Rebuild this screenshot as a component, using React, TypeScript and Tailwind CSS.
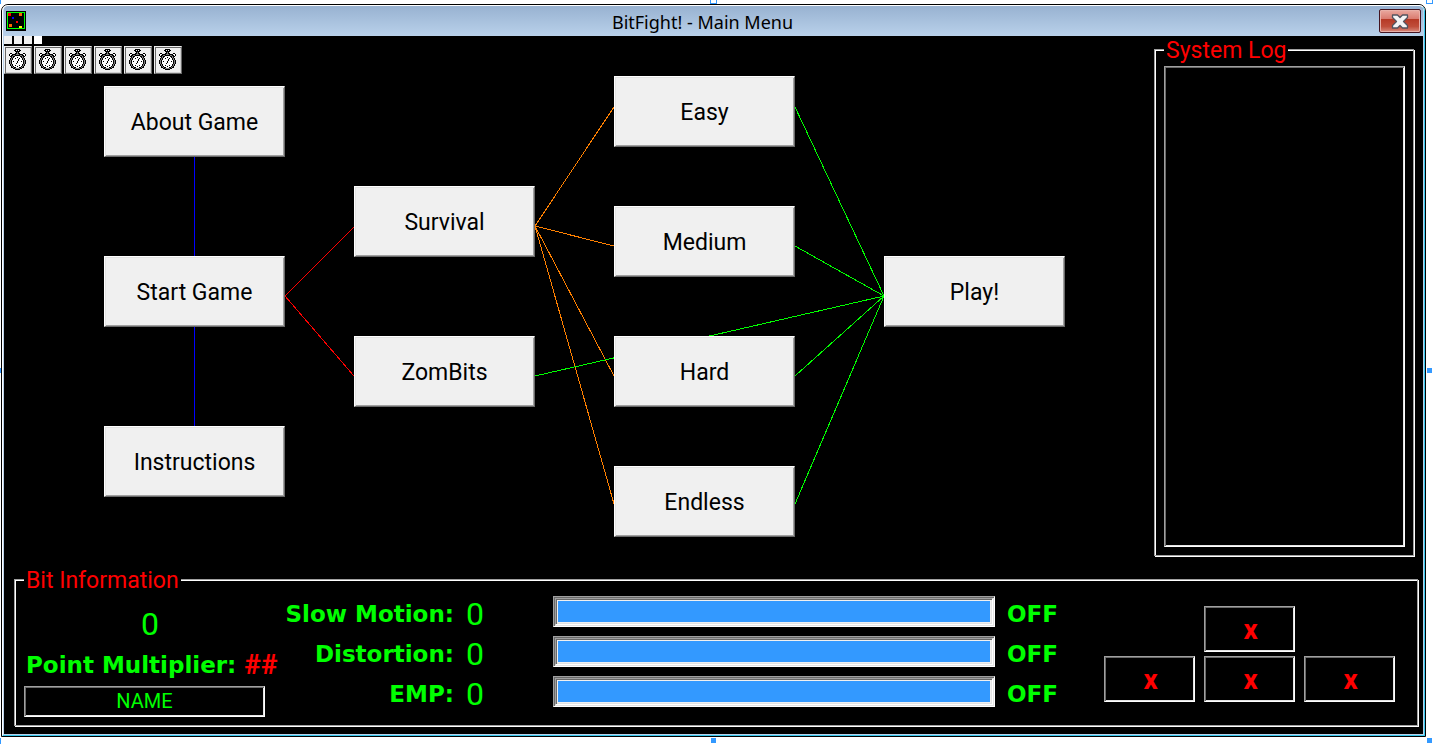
import React from "react";

const raised =
  "border border-t-white border-l-white border-r-[#696969] border-b-[#696969] shadow-[inset_1px_1px_0_#e3e3e3,inset_-1px_-1px_0_#a0a0a0]";
const sunken =
  "border border-t-[#a0a0a0] border-l-[#a0a0a0] border-r-white border-b-white shadow-[inset_1px_1px_0_#696969,inset_-1px_-1px_0_#e3e3e3]";
const etched =
  "min-w-0 border border-[#a0a0a0] shadow-[inset_1px_1px_0_#fff,1px_1px_0_#fff]";
const legendText = "bg-black px-0.5 pt-1 text-[23px] leading-[22px] text-[#ff0000]";

const STOPWATCH = [
  "......#####......",
  ".....##.#.##.....",
  "......#####......",
  ".......#o#.......",
  ".##...##o##...##.",
  "#ww####ooo####ww#",
  "#w##oo#####oo##w#",
  ".##o##wwwww##o##.",
  "..#o#www#www#o#..",
  ".#o#ww#www#ww#o#.",
  ".#o#wwwww#www#o#.",
  "#o#wwwwww#wwww#o#",
  "#o#w#www#www#w#o#",
  "#o#wwwww#wwwww#o#",
  "#o#wwww#wwwwww#o#",
  ".#o#wwwwwwwww#o#.",
  ".#o#ww#www#ww#o#.",
  "..#o#www#www#o#..",
  "..##o##www##o##..",
  "....##ooooo##....",
  "......#####......",
];
const INK: Record<string, string> = { "#": "#000", o: "#808080", w: "#fff" };

function Stopwatch() {
  return (
    <svg width="17" height="21" viewBox="0 0 17 21" shapeRendering="crispEdges" aria-hidden="true">
      {STOPWATCH.flatMap((row, y) =>
        [...row].map((c, x) =>
          c === "." ? null : <rect key={`${x}-${y}`} x={x} y={y} width="1" height="1" fill={INK[c]} />
        )
      )}
    </svg>
  );
}

function AppIcon() {
  return (
    <svg width="20" height="20" viewBox="0 0 20 20" shapeRendering="crispEdges" aria-hidden="true">
      <rect width="20" height="20" fill="#000" />
      <rect x="1.5" y="1.5" width="17" height="16" fill="none" stroke="#00ff00" />
      <rect x="2" y="2" width="3" height="3" fill="#ff0000" />
      <rect x="13" y="2" width="3" height="3" fill="#ff6600" />
      <rect x="6" y="6" width="2" height="2" fill="#0000ff" />
      <rect x="10" y="10" width="2" height="2" fill="#ff0000" />
      <rect x="3" y="13" width="3" height="3" fill="#ff6600" />
      <rect x="13" y="15" width="3" height="2" fill="#ffff00" />
    </svg>
  );
}

function TitleBar() {
  return (
    <header className="flex h-[30px] items-center bg-linear-to-b from-[#98b2d1] to-[#b9d1ea] pr-0.5 pl-0.5">
      <AppIcon />
      <h1 className="flex-1 pt-0.5 text-center font-['Noto_Sans'] text-[18px] leading-6 text-black">
        BitFight! - Main Menu
      </h1>
      <button
        type="button"
        aria-label="Close"
        className="flex h-6 w-[42px] items-center justify-center rounded-[2px] border border-[#431420] bg-[linear-gradient(to_bottom,#eaaaa0_0%,#d9796d_42%,#b63a26_43%,#c04e3a_75%,#d88a7c_100%)] shadow-[inset_0_0_0_1px_#e8b0a8]"
      >
        <svg width="18" height="15" viewBox="0 0 18 15" aria-hidden="true">
          <path
            d="M1.5 1H6.500L9 3.500L11.500 1H16.500V3.500L12.500 7.500L16.500 11.500V14H11.500L9 11.500L6.500 14H1.500V11.500L5.500 7.500L1.500 3.500Z"
            fill="#f4f4f4"
            stroke="#53545f"
            strokeWidth="1.300"
            strokeLinejoin="round"
          />
        </svg>
      </button>
    </header>
  );
}

const NODES = [
  { label: "About Game", at: "left-[100px] top-[50px]" },
  { label: "Start Game", at: "left-[100px] top-[220px]" },
  { label: "Instructions", at: "left-[100px] top-[390px]" },
  { label: "Survival", at: "left-[350px] top-[150px]" },
  { label: "ZomBits", at: "left-[350px] top-[300px]" },
  { label: "Easy", at: "left-[610px] top-[40px]" },
  { label: "Medium", at: "left-[610px] top-[170px]" },
  { label: "Hard", at: "left-[610px] top-[300px]" },
  { label: "Endless", at: "left-[610px] top-[430px]" },
  { label: "Play!", at: "left-[880px] top-[220px]" },
];

const EDGES: [string, string][] = [
  ["#0000ff", "M190.500 121V220M190.500 291V390"],
  ["#ff0000", "M281 260L350 191M281 260L350 340"],
  ["#ff8000", "M531 190L610 71M531 190L610 210M531 190L610 340M531 190L610 468"],
  ["#00ff00", "M880 260L791 71M880 260L791 210M880 260L531 340M880 260L791 340M880 260L791 468"],
];

function MenuMap() {
  return (
    <nav aria-label="Main menu" className="relative min-w-[1064px] flex-1">
      <div className="flex gap-0.5" aria-hidden="true">
        <span className="size-2 bg-[#f0f0f0]" />
        <span className="size-2 bg-[#f0f0f0]" />
        <span className="size-2 bg-[#f0f0f0]" />
        <span className="size-2 bg-white" />
      </div>
      <div className="mt-0.5 flex gap-0.5">
        {[1, 2, 3, 4, 5, 6].map((n) => (
          <button
            key={n}
            type="button"
            aria-label={`Timer ${n}`}
            className="flex size-7 items-center justify-center border border-t-[#f0f0f0] border-r-[#696969] border-b-[#696969] border-l-[#f0f0f0] bg-[#f0f0f0] pr-0.5 pb-0.5 shadow-[inset_1px_1px_0_#696969,inset_-1px_-1px_0_#d0d0d0]"
          >
            <Stopwatch />
          </button>
        ))}
      </div>
      <svg
        className="absolute top-0 left-0"
        width="1064"
        height="520"
        viewBox="0 0 1064 520"
        fill="none"
        shapeRendering="crispEdges"
        aria-hidden="true"
      >
        {EDGES.map(([color, d]) => (
          <path key={color} d={d} stroke={color} />
        ))}
      </svg>
      {NODES.map(({ label, at }) => (
        <button
          key={label}
          type="button"
          className={`absolute h-[71px] w-[181px] bg-[#f0f0f0] pt-0.5 text-[23px] leading-7 text-black ${raised} ${at}`}
        >
          {label}
        </button>
      ))}
    </nav>
  );
}

function SystemLog() {
  return (
    <fieldset className={`mr-[9px] h-[520px] w-[260px] shrink-0 px-[9px] ${etched}`}>
      <legend className={legendText}>System Log</legend>
      <textarea
        readOnly
        aria-label="System Log"
        className={`mt-1 block h-[481px] w-[241px] resize-none bg-black text-[#ff0000] outline-none ${sunken}`}
      />
    </fieldset>
  );
}

const boldGreen = "font-['DejaVu_Sans'] text-[23px] leading-7 font-bold text-[#00ff00]";
const digit = "text-[32px] leading-8 text-[#00ff00]";

function Power({ label }: { label: string }) {
  return (
    <div className="flex h-10 items-center">
      <span className={`w-[170px] pt-1 text-right whitespace-nowrap ${boldGreen}`}>{label}</span>
      <span className={`w-[99px] pt-1 pl-3 ${digit}`}>0</span>
      <div className={`mb-px h-[31px] flex-1 p-px ${sunken}`}>
        <div className={`h-full p-px ${sunken}`}>
          <progress
            value={100}
            max={100}
            aria-label={label}
            className="block h-full w-full appearance-none border border-[#f0f0f0] bg-[#3399ff] [&::-webkit-progress-bar]:bg-[#f0f0f0] [&::-webkit-progress-value]:bg-[#3399ff]"
          />
        </div>
      </div>
      <span className={`w-[109px] pt-1 pl-3 ${boldGreen}`}>OFF</span>
    </div>
  );
}

function Slot({ place }: { place: string }) {
  return (
    <div
      className={`flex h-[46px] w-[91px] items-center justify-center pt-0.5 pl-0.5 text-[28px] leading-8 font-bold text-[#ff0000] ${place} ${sunken}`}
    >
      x
    </div>
  );
}

function BitInformation() {
  return (
    <fieldset className={`mt-[10px] mr-[5px] ml-[10px] h-[160px] px-[9px] ${etched}`}>
      <legend className={legendText}>Bit Information</legend>
      <div className="flex items-start">
        <div className="w-[260px] shrink-0 pt-3">
          <div className={`flex h-10 w-[252px] items-center justify-center ${digit}`}>0</div>
          <div className="flex h-10 items-center gap-2 pt-0.5 pl-0.5 whitespace-nowrap">
            <span className={boldGreen}>Point Multiplier:</span>
            <span className="text-[28px] leading-8 font-bold text-[#ff0000]">##</span>
          </div>
          <input
            type="text"
            aria-label="Name"
            defaultValue="NAME"
            className={`mt-0.5 block h-[31px] w-[241px] bg-black pb-0.5 text-center text-[20px] leading-6 text-[#00ff00] outline-none ${sunken}`}
          />
        </div>
        <div className="min-w-0 flex-1">
          <Power label="Slow Motion:" />
          <Power label="Distortion:" />
          <Power label="EMP:" />
        </div>
        <div className="mt-[14px] mr-[13px] grid shrink-0 grid-cols-3 gap-x-[9px] gap-y-1">
          <Slot place="col-start-2" />
          <Slot place="col-start-1" />
          <Slot place="col-start-2" />
          <Slot place="col-start-3" />
        </div>
      </div>
    </fieldset>
  );
}

function SelectionHandles() {
  return (
    <div aria-hidden="true">
      <i className="absolute top-0 left-0 h-1 w-px bg-[#3399ff]" />
      <i className="absolute top-[368px] left-0 h-[5px] w-px bg-[#3399ff]" />
      <i className="absolute top-[738px] left-0 h-[6px] w-px bg-[#3399ff]" />
      <i className="absolute top-0 right-[731px] h-1 w-[7px] border border-t-0 border-[#3399ff] bg-white" />
      <i className="absolute top-0 right-[15px] h-1 w-[7px] border border-t-0 border-[#3399ff] bg-white" />
      <i className="absolute top-[368px] right-4 size-[5px] bg-[#3399ff]" />
      <i className="absolute top-[738px] right-[732px] size-[5px] bg-[#3399ff]" />
      <i className="absolute top-[738px] right-4 size-[5px] bg-[#3399ff]" />
    </div>
  );
}

export default function App() {
  return (
    <div className="relative bg-white pt-1 pr-[22px] pb-[15px] pl-px font-['Roboto',sans-serif]">
      <main className="overflow-hidden rounded-t-[7px] border border-black">
        <div className="overflow-hidden rounded-t-[6px] border border-t-white border-r-[#38c8ec] border-b-[#38c8ec] border-l-white">
          <div className="border-x border-b border-[#b9d1ea]">
            <TitleBar />
            <div className="bg-black pb-2">
              <div className="flex">
                <MenuMap />
                <SystemLog />
              </div>
              <BitInformation />
            </div>
          </div>
        </div>
      </main>
      <SelectionHandles />
    </div>
  );
}
